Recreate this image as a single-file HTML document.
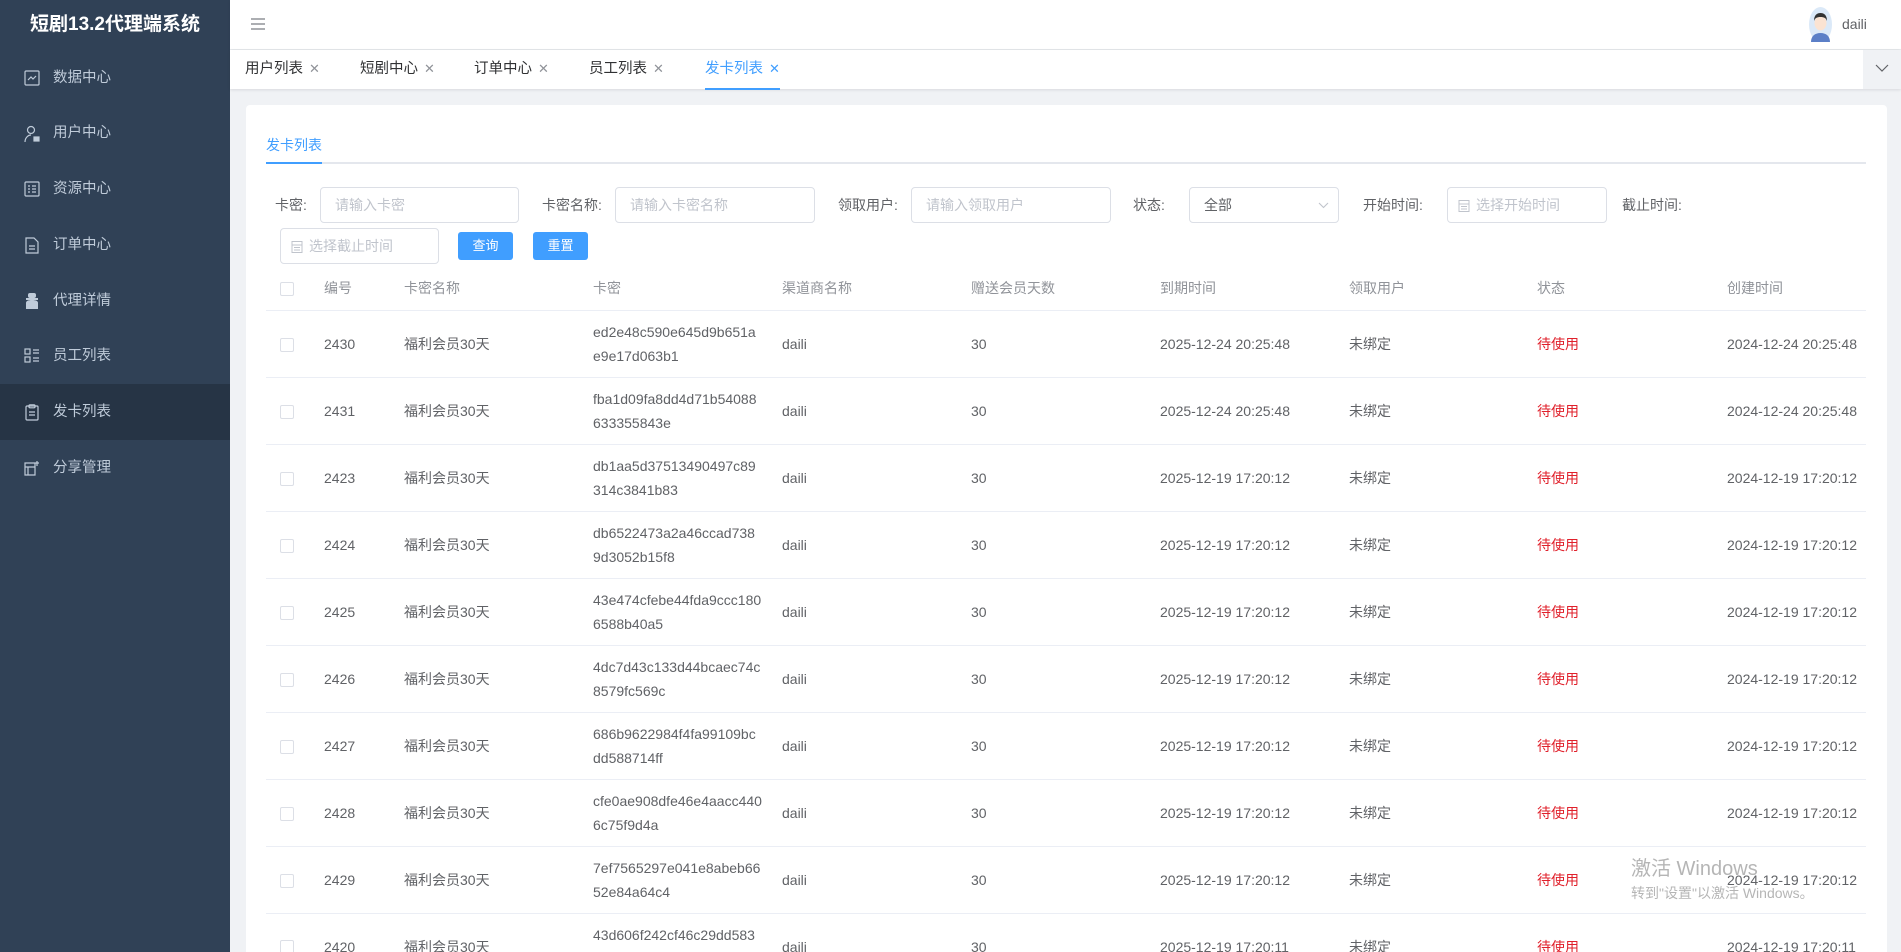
<!DOCTYPE html>
<html style="width:1901px;height:952px;overflow:hidden"><head><meta charset="utf-8"><style>
*{margin:0;padding:0;box-sizing:border-box}
body{width:1901px;height:952px;overflow:hidden;background:#f0f2f5;font-family:"Liberation Sans","Noto Sans CJK SC",sans-serif;color:#606266;position:relative;font-size:14.5px}
.abs{position:absolute}
#side{left:0;top:0;width:230px;height:952px;background:#304156}
#side .title{position:absolute;left:0;top:0;width:230px;height:49px;line-height:49px;text-align:center;color:#fff;font-weight:bold;font-size:19px}
.mi{position:absolute;left:0;width:230px;height:56px;color:#bfcbd9;font-size:14.5px}
.mi span{position:absolute;left:53px;top:0;line-height:56px}
.mi svg{position:absolute;left:24px;top:20px}
.mi.act{background:#263445}
#hdr{left:230px;top:0;width:1671px;height:49px;background:#fff;box-shadow:0 1px 3px rgba(0,21,41,.08)}
#tabs{left:230px;top:50px;width:1671px;height:39px;background:#fff;box-shadow:0 1px 3px rgba(0,0,0,.1)}
.tb{position:absolute;top:0;line-height:38px;font-size:14.5px;color:#303133}
.tb i{font-style:normal;color:#909399;margin-left:6px;font-size:13px}
.tb.act{color:#409eff;border-bottom:2px solid #409eff}
.tb.act i{color:#409eff}
#card{left:246px;top:105px;width:1641px;height:847px;background:#fff;border-radius:4px 4px 0 0}
.lbl{position:absolute;font-size:14px;color:#606266;line-height:36px}
.inp{position:absolute;height:36px;border:1px solid #dcdfe6;border-radius:4px;background:#fff;color:#c0c4cc;font-size:14px;line-height:34px;padding-left:14px}
.btn{position:absolute;height:28px;line-height:28px;background:#409eff;color:#fff;font-size:13px;text-align:center;border-radius:3px}
table{position:absolute;left:266px;top:266px;border-collapse:collapse;table-layout:fixed;width:1600px}
td,th{padding-left:12px;text-align:left;border-bottom:1px solid #ebeef5;font-size:14px;line-height:24px;vertical-align:middle}
th{height:44px;color:#909399;font-weight:normal}
td{height:67px}
.cb{display:inline-block;width:14px;height:14px;border:1px solid #dcdfe6;border-radius:2px;background:#fff;vertical-align:middle}
.red{color:#e0202b}
</style></head><body>
<div id="side" class="abs">
<div class="title">短剧13.2代理端系统</div>
<div class="mi" style="top:50px"><svg width="16" height="16" viewBox="0 0 16 16" fill="none" stroke="#bfcbd9" stroke-width="1.2"><rect x="1" y="1" width="14" height="14" rx="1"/><path d="M4 10l3-3 2 2 3-3"/></svg><span>数据中心</span></div>
<div class="mi" style="top:105px"><svg width="16" height="18" viewBox="0 0 16 18" fill="none" stroke="#bfcbd9" stroke-width="1.2"><circle cx="7" cy="5" r="3.5"/><path d="M1 17c0-4 3-7 6-7"/><rect x="10" y="12" width="5" height="4" fill="#bfcbd9"/></svg><span>用户中心</span></div>
<div class="mi" style="top:161px"><svg width="16" height="16" viewBox="0 0 16 16" fill="none" stroke="#bfcbd9" stroke-width="1.2"><rect x="1" y="1" width="14" height="14" rx="1"/><path d="M4 5h2M4 8h2M4 11h2M8 5h4M8 8h4M8 11h4"/></svg><span>资源中心</span></div>
<div class="mi" style="top:217px"><svg width="16" height="17" viewBox="0 0 16 17" fill="none" stroke="#bfcbd9" stroke-width="1.2"><path d="M2 1h8l4 4v11H2z"/><path d="M5 9h6M5 12h6"/></svg><span>订单中心</span></div>
<div class="mi" style="top:273px"><svg width="16" height="16" viewBox="0 0 16 16" fill="#bfcbd9"><rect x="4" y="0" width="8" height="5" rx="2"/><rect x="2" y="5" width="12" height="2"/><path d="M2 16v-6c0-2 2-3 6-3s6 1 6 3v6z"/></svg><span>代理详情</span></div>
<div class="mi" style="top:328px"><svg width="16" height="16" viewBox="0 0 16 16" fill="none" stroke="#bfcbd9" stroke-width="1.2"><rect x="1" y="1" width="5" height="5"/><rect x="1" y="9" width="5" height="5"/><path d="M9 2h6M9 5h6M9 10h6M9 13h6"/></svg><span>员工列表</span></div>
<div class="mi act" style="top:384px"><svg width="16" height="17" viewBox="0 0 16 17" fill="none" stroke="#bfcbd9" stroke-width="1.2"><rect x="2" y="2" width="12" height="14" rx="1"/><rect x="5" y="0.8" width="6" height="3" rx="1"/><path d="M5 8h6M5 11h6"/></svg><span>发卡列表</span></div>
<div class="mi" style="top:440px"><svg width="16" height="16" viewBox="0 0 16 16" fill="none" stroke="#bfcbd9" stroke-width="1.2"><path d="M1 3h10v12H1zM1 7h10M4 7v8M13 1v5M11 3h4"/></svg><span>分享管理</span></div>
</div>
<div id="hdr" class="abs">
<svg class="abs" style="left:20px;top:17px" width="16" height="14" viewBox="0 0 16 14" stroke="#909399" stroke-width="1.6"><path d="M1 2h14M1 7h14M1 12h14"/></svg>
<svg class="abs" style="left:1573px;top:7px" width="35" height="35" viewBox="0 0 35 35"><ellipse cx="17.5" cy="17.5" rx="11.5" ry="17.5" fill="#dbe9f8"/><path d="M8 35c0-6 4-9 9.5-9s9.5 3 9.5 9z" fill="#5b7fc7"/><ellipse cx="17.5" cy="16" rx="6" ry="7.5" fill="#fbe3d2"/><path d="M11 14c0-6 3-8 6.5-8s6.5 2 6.5 8c-1-3-3-4-6.5-4s-5.5 1-6.5 4z" fill="#333"/></svg>
<div class="abs" style="left:1612px;top:0;line-height:49px;font-size:14px;color:#606266">daili</div>
</div>
<div id="tabs" class="abs">
<div class="tb" style="left:15px">用户列表<i>✕</i></div>
<div class="tb" style="left:130px">短剧中心<i>✕</i></div>
<div class="tb" style="left:244px">订单中心<i>✕</i></div>
<div class="tb" style="left:359px">员工列表<i>✕</i></div>
<div class="tb act" style="left:475px">发卡列表<i>✕</i></div>
<div class="abs" style="left:1633px;top:0;width:38px;height:39px;background:#f0f2f5"><svg class="abs" style="left:12px;top:14px" width="14" height="9" viewBox="0 0 14 9" fill="none" stroke="#606266" stroke-width="1.2"><path d="M1 1l6 6 6-6"/></svg></div>
</div>
<div id="card" class="abs"></div>
<div class="abs" style="left:266px;top:133px;font-size:14px;color:#409eff;line-height:24px">发卡列表</div>
<div class="abs" style="left:266px;top:162px;width:1600px;height:2px;background:#e4e7ed"></div>
<div class="abs" style="left:266px;top:162px;width:56px;height:2px;background:#409eff"></div>
<div class="lbl" style="left:275px;top:187px">卡密:</div>
<div class="inp" style="left:320px;top:187px;width:199px">请输入卡密</div>
<div class="lbl" style="left:542px;top:187px">卡密名称:</div>
<div class="inp" style="left:615px;top:187px;width:200px">请输入卡密名称</div>
<div class="lbl" style="left:838px;top:187px">领取用户:</div>
<div class="inp" style="left:911px;top:187px;width:200px">请输入领取用户</div>
<div class="lbl" style="left:1133px;top:187px">状态:</div>
<div class="inp" style="left:1189px;top:187px;width:150px;color:#606266">全部<svg class="abs" style="left:128px;top:14px" width="11" height="7" viewBox="0 0 11 7" fill="none" stroke="#c0c4cc" stroke-width="1.1"><path d="M1 1l4.5 4.5L10 1"/></svg></div>
<div class="lbl" style="left:1363px;top:187px">开始时间:</div>
<div class="inp" style="left:1447px;top:187px;width:160px;padding-left:10px"><svg width="12" height="13" viewBox="0 0 12 13" fill="none" stroke="#c0c4cc" style="vertical-align:-2px;margin-right:6px"><rect x="1" y="1.5" width="10" height="11"/><path d="M1 5h10M3 7.5h6M3 10h6"/></svg>选择开始时间</div>
<div class="lbl" style="left:1622px;top:187px">截止时间:</div>
<div class="inp" style="left:280px;top:228px;width:159px;padding-left:10px"><svg width="12" height="13" viewBox="0 0 12 13" fill="none" stroke="#c0c4cc" style="vertical-align:-2px;margin-right:6px"><rect x="1" y="1.5" width="10" height="11"/><path d="M1 5h10M3 7.5h6M3 10h6"/></svg>选择截止时间</div>
<div class="btn" style="left:458px;top:232px;width:55px">查询</div>
<div class="btn" style="left:533px;top:232px;width:55px">重置</div>
<table>
<colgroup><col style="width:46px"><col style="width:80px"><col style="width:189px"><col style="width:189px"><col style="width:189px"><col style="width:189px"><col style="width:189px"><col style="width:188px"><col style="width:190px"><col style="width:151px"></colgroup>
<tr><th style="padding-left:14px"><span class="cb"></span></th><th>编号</th><th>卡密名称</th><th>卡密</th><th>渠道商名称</th><th>赠送会员天数</th><th>到期时间</th><th>领取用户</th><th>状态</th><th>创建时间</th></tr>
<tr><td style="padding-left:14px"><span class="cb"></span></td><td>2430</td><td>福利会员30天</td><td>ed2e48c590e645d9b651a<br>e9e17d063b1</td><td>daili</td><td>30</td><td>2025-12-24 20:25:48</td><td>未绑定</td><td class="red">待使用</td><td>2024-12-24 20:25:48</td></tr>
<tr><td style="padding-left:14px"><span class="cb"></span></td><td>2431</td><td>福利会员30天</td><td>fba1d09fa8dd4d71b54088<br>633355843e</td><td>daili</td><td>30</td><td>2025-12-24 20:25:48</td><td>未绑定</td><td class="red">待使用</td><td>2024-12-24 20:25:48</td></tr>
<tr><td style="padding-left:14px"><span class="cb"></span></td><td>2423</td><td>福利会员30天</td><td>db1aa5d37513490497c89<br>314c3841b83</td><td>daili</td><td>30</td><td>2025-12-19 17:20:12</td><td>未绑定</td><td class="red">待使用</td><td>2024-12-19 17:20:12</td></tr>
<tr><td style="padding-left:14px"><span class="cb"></span></td><td>2424</td><td>福利会员30天</td><td>db6522473a2a46ccad738<br>9d3052b15f8</td><td>daili</td><td>30</td><td>2025-12-19 17:20:12</td><td>未绑定</td><td class="red">待使用</td><td>2024-12-19 17:20:12</td></tr>
<tr><td style="padding-left:14px"><span class="cb"></span></td><td>2425</td><td>福利会员30天</td><td>43e474cfebe44fda9ccc180<br>6588b40a5</td><td>daili</td><td>30</td><td>2025-12-19 17:20:12</td><td>未绑定</td><td class="red">待使用</td><td>2024-12-19 17:20:12</td></tr>
<tr><td style="padding-left:14px"><span class="cb"></span></td><td>2426</td><td>福利会员30天</td><td>4dc7d43c133d44bcaec74c<br>8579fc569c</td><td>daili</td><td>30</td><td>2025-12-19 17:20:12</td><td>未绑定</td><td class="red">待使用</td><td>2024-12-19 17:20:12</td></tr>
<tr><td style="padding-left:14px"><span class="cb"></span></td><td>2427</td><td>福利会员30天</td><td>686b9622984f4fa99109bc<br>dd588714ff</td><td>daili</td><td>30</td><td>2025-12-19 17:20:12</td><td>未绑定</td><td class="red">待使用</td><td>2024-12-19 17:20:12</td></tr>
<tr><td style="padding-left:14px"><span class="cb"></span></td><td>2428</td><td>福利会员30天</td><td>cfe0ae908dfe46e4aacc440<br>6c75f9d4a</td><td>daili</td><td>30</td><td>2025-12-19 17:20:12</td><td>未绑定</td><td class="red">待使用</td><td>2024-12-19 17:20:12</td></tr>
<tr><td style="padding-left:14px"><span class="cb"></span></td><td>2429</td><td>福利会员30天</td><td>7ef7565297e041e8abeb66<br>52e84a64c4</td><td>daili</td><td>30</td><td>2025-12-19 17:20:12</td><td>未绑定</td><td class="red">待使用</td><td>2024-12-19 17:20:12</td></tr>
</table>
<div class="abs" style="left:266px;top:913px;width:1600px;height:39px;overflow:hidden">
<div class="abs" style="left:14px;top:27px;width:14px;height:14px;border:1px solid #dcdfe6;border-radius:2px"></div>
<div class="abs" style="left:58px;top:22px;font-size:14px;line-height:24px">2420</div>
<div class="abs" style="left:138px;top:22px;font-size:14px;line-height:24px">福利会员30天</div>
<div class="abs" style="left:327px;top:10px;font-size:14px;line-height:24px">43d606f242cf46c29dd583</div>
<div class="abs" style="left:516px;top:22px;font-size:14px;line-height:24px">daili</div>
<div class="abs" style="left:705px;top:22px;font-size:14px;line-height:24px">30</div>
<div class="abs" style="left:894px;top:22px;font-size:14px;line-height:24px">2025-12-19 17:20:11</div>
<div class="abs" style="left:1083px;top:22px;font-size:14px;line-height:24px">未绑定</div>
<div class="abs red" style="left:1271px;top:22px;font-size:14px;line-height:24px">待使用</div>
<div class="abs" style="left:1461px;top:22px;font-size:14px;line-height:24px">2024-12-19 17:20:11</div>
</div>
<div class="abs" style="left:1631px;top:856px;font-size:20px;color:rgba(120,120,120,.55);line-height:26px">激活 Windows</div>
<div class="abs" style="left:1631px;top:883px;font-size:14px;color:rgba(120,120,120,.55);line-height:20px">转到"设置"以激活 Windows。</div>
</body></html>
